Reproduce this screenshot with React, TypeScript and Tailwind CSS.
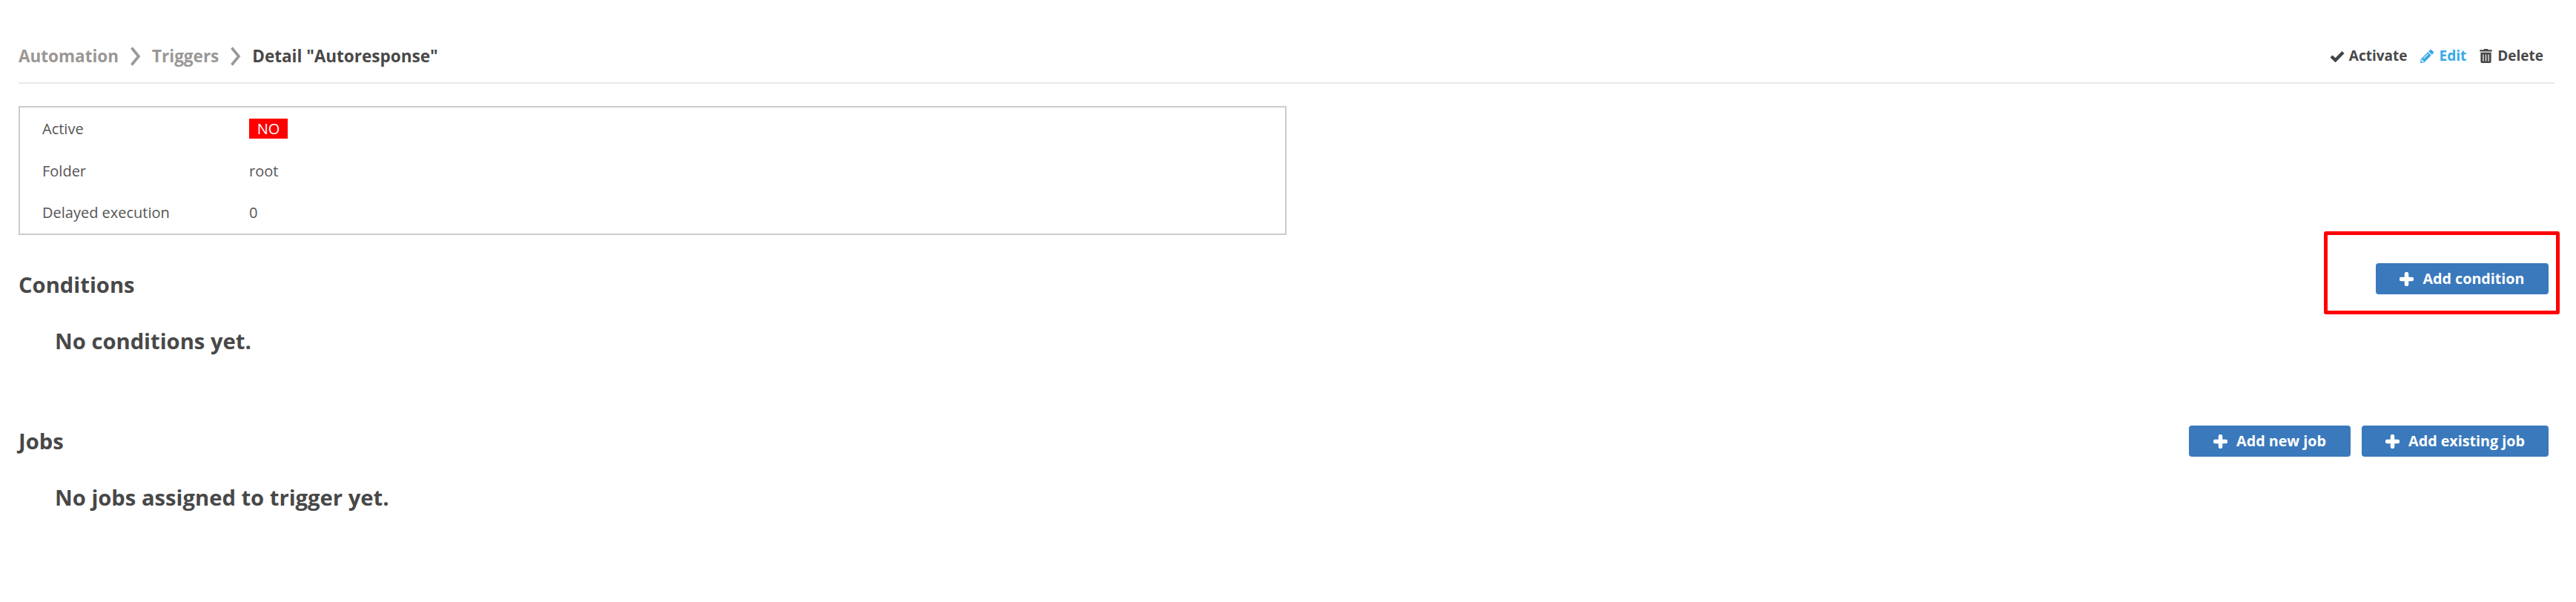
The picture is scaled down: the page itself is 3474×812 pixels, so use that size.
import React from "react";
import { FaPencilAlt, FaTrashAlt } from "react-icons/fa";

const Chevron = () => (
  <svg width="15" height="28" viewBox="0 0 15 28" fill="none" className="shrink-0">
    <path d="M2.5 2.5 L12 14 L2.5 25.5" stroke="#9b9795" strokeWidth="3.6" />
  </svg>
);

const Plus = () => (
  <svg width="19" height="19" viewBox="0 0 19 19" className="shrink-0">
    <path d="M9.5 2.5 V16.5 M2.5 9.5 H16.5" stroke="#fff" strokeWidth="5.5" strokeLinecap="round" />
  </svg>
);

const Check = () => (
  <svg width="20" height="16" viewBox="0 0 20 16" fill="none" className="shrink-0">
    <path d="M2 8 L7.5 13.2 L18 2.5" stroke="#444" strokeWidth="4.4" />
  </svg>
);

const AddButton = ({ label, className }: { label: string; className: string }) => (
  <button className={`flex h-[42px] items-center justify-center gap-[12px] rounded-[4px] bg-[#3a79bc] text-[19.7px] font-bold text-white ${className}`}>
    <Plus />
    {label}
  </button>
);

const Row = ({ label, className, children }: { label: string; className: string; children: React.ReactNode }) => (
  <div className={`flex items-center text-[20px] text-[#555] ${className}`}>
    <div className="w-[309px] pl-[30px]">{label}</div>
    <div>{children}</div>
  </div>
);

export default function App() {
  return (
    <div className="h-[812px] bg-white pl-[25px] pr-[29px] text-[#484848] [font-family:'Open_Sans',sans-serif]">
      <header className="flex h-[113px] items-center justify-between border-b-2 border-[#e8e8e8] pt-[61px] pb-[21px]">
        <nav className="flex items-center text-[22.5px] font-bold">
          <span className="text-[#9b9795]">Automation</span>
          <span className="mx-[15px]"><Chevron /></span>
          <span className="text-[#9b9795]">Triggers</span>
          <span className="mx-[15px]"><Chevron /></span>
          <span>Detail "Autoresponse"</span>
        </nav>
        <div className="mr-[15px] flex items-center gap-[18px] text-[19px] font-bold">
          <span className="flex items-center gap-[6px]"><Check />Activate</span>
          <span className="flex items-center gap-[7px] text-[#36a9e9]"><FaPencilAlt className="h-[18px] w-[18px]" />Edit</span>
          <span className="flex items-center gap-[7px]"><FaTrashAlt className="h-[19px] w-[17px]" />Delete</span>
        </div>
      </header>

      <section className="mt-[30px] w-[1710px] border-2 border-[#ccc]">
        <Row label="Active" className="h-[57px]"><span className="block h-[27px] w-[52px] bg-[#ff0000] text-center text-[20px] leading-[27px] text-white">NO</span></Row>
        <Row label="Folder" className="h-[57px]">root</Row>
        <Row label="Delayed execution" className="h-[56px]">0</Row>
      </section>

      <section className="mt-[38px] flex items-start justify-between">
        <h2 className="mt-[9px] text-[29.2px] leading-[40px] font-bold">Conditions</h2>
        <div className="relative mr-[8px]">
          <AddButton label="Add condition" className="w-[233px]" />
          <div className="absolute -top-[43px] -left-[70px] h-[112px] w-[318px] rounded-[3px] border-[5px] border-[#ff0000]" />
        </div>
      </section>
      <p className="mt-[36px] ml-[49px] text-[29.2px] leading-[40px] font-bold">No conditions yet.</p>

      <section className="mt-[94px] flex items-center justify-between">
        <h2 className="text-[29.2px] leading-[40px] font-bold">Jobs</h2>
        <div className="mr-[8px] flex gap-[15px]">
          <AddButton label="Add new job" className="w-[218px]" />
          <AddButton label="Add existing job" className="w-[252px]" />
        </div>
      </section>
      <p className="mt-[35px] ml-[49px] text-[29.2px] leading-[40px] font-bold">No jobs assigned to trigger yet.</p>
    </div>
  );
}
